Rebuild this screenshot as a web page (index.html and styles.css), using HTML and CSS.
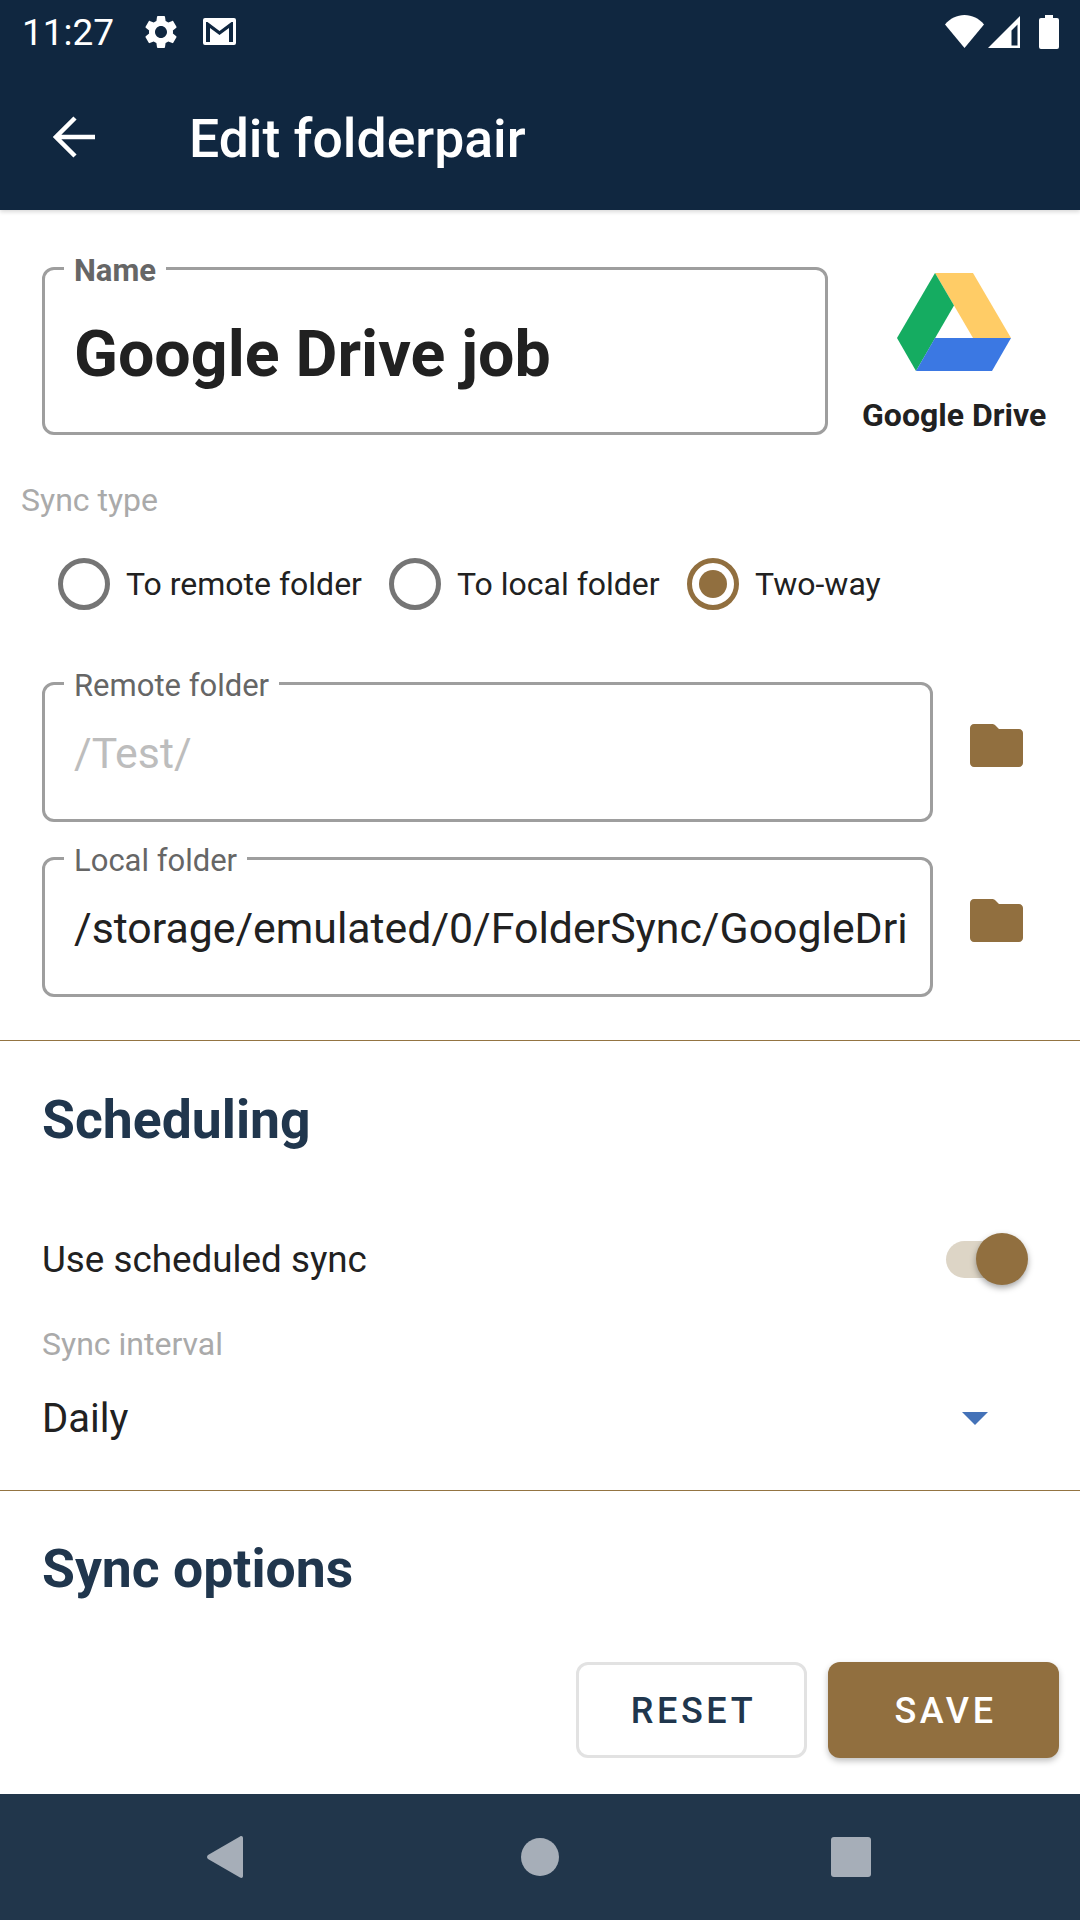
FILE: index.html

```html
<!DOCTYPE html>
<html lang="en-US">
    <head>
        <meta charset="utf-8">
        <title>Edit folderpair</title>
        <link rel="stylesheet" href="styles.css">
    </head>
    <body>
        <header class="appbar">
            <div class="statusbar">
                <span class="clock">11:27</span>
                <svg class="icon-gear" viewBox="0 0 24 24"><path fill="#fff" d="M19.14 12.94c.04-.3.06-.61.06-.94 0-.32-.02-.64-.07-.94l2.03-1.58c.18-.14.23-.41.12-.61l-1.92-3.32c-.12-.22-.37-.29-.59-.22l-2.39.96c-.5-.38-1.03-.7-1.62-.94l-.36-2.54c-.04-.24-.24-.41-.48-.41h-3.84c-.24 0-.43.17-.47.41l-.36 2.54c-.59.24-1.13.57-1.62.94l-2.39-.96c-.22-.08-.47 0-.59.22L2.74 8.87c-.12.21-.08.47.12.61l2.03 1.58c-.05.3-.09.63-.09.94s.02.64.07.94l-2.03 1.58c-.18.14-.23.41-.12.61l1.92 3.32c.12.22.37.29.59.22l2.39-.96c.5.38 1.03.7 1.62.94l.36 2.54c.05.24.24.41.48.41h3.84c.24 0 .44-.17.47-.41l.36-2.54c.59-.24 1.13-.56 1.62-.94l2.39.96c.22.08.47 0 .59-.22l1.92-3.32c.12-.22.07-.47-.12-.61l-2.01-1.58zM12 15.6c-1.98 0-3.6-1.62-3.6-3.6s1.62-3.6 3.6-3.6 3.6 1.62 3.6 3.6-1.62 3.6-3.6 3.6z"/></svg>
                <svg class="icon-mail" viewBox="0 0 33 27"><path fill="#fff" fill-rule="evenodd" d="M2 0h29a2 2 0 0 1 2 2v23a2 2 0 0 1-2 2H2a2 2 0 0 1-2-2V2a2 2 0 0 1 2-2zM3 4v20h4V10l9.500 7L26 10v14h4V4h-1.500L16.500 13 4.500 4z"/></svg>
                <span class="status-gap"></span>
                <svg class="icon-wifi" viewBox="0 0 39 33"><path fill="#fff" d="M19.500 33 0 9.500C5 3.500 12 0 19.500 0S34 3.500 39 9.500z"/></svg>
                <svg class="icon-signal" viewBox="0 0 32 32"><path fill="#fff" fill-rule="evenodd" d="M32 0v32H0zM29.500 8.500l-6 6V29.500h6z"/></svg>
                <svg class="icon-battery" viewBox="0 0 20 34"><path fill="#fff" d="M6 0h8v3h4a2 2 0 0 1 2 2v27a2 2 0 0 1-2 2H2a2 2 0 0 1-2-2V5a2 2 0 0 1 2-2h4z"/></svg>
            </div>
            <div class="toolbar">
                <svg class="icon-back" viewBox="0 0 42 42"><path fill="none" stroke="#fff" stroke-width="4.500" d="M42 21H4M22 2 3 21l19 19"/></svg>
                <h1>Edit folderpair</h1>
            </div>
        </header>

        <main class="content">
            <div class="name-row">
                <fieldset class="field field-name">
                    <legend>Name</legend>
                    <div class="value">Google Drive job</div>
                </fieldset>
                <div class="provider">
                    <svg class="drive-logo" viewBox="0 0 114 98">
                        <path fill="#ffcc66" d="M38 0h38l38 65H76z"/>
                        <path fill="#15ac61" d="M38 0 57 32.500 19 98 0 65z"/>
                        <path fill="#3b78e3" d="M38 65h76L95 98H19z"/>
                    </svg>
                    <span>Google Drive</span>
                </div>
            </div>

            <div class="sync-label">Sync type</div>
            <div class="radios">
                <label class="radio radio-remote"><span class="dot"></span>To remote folder</label>
                <label class="radio radio-local"><span class="dot"></span>To local folder</label>
                <label class="radio on"><span class="dot"></span>Two-way</label>
            </div>

            <div class="folder-row">
                <fieldset class="field field-folder">
                    <legend>Remote folder</legend>
                    <div class="value muted">/Test/</div>
                </fieldset>
                <svg class="icon-folder" viewBox="0 0 53 43"><path fill="#916f3f" d="M4 0h18c1.500 0 2.500.5 3.500 1.500L29 5h20c2.200 0 4 1.800 4 4v30c0 2.200-1.800 4-4 4H4c-2.200 0-4-1.800-4-4V4c0-2.200 1.800-4 4-4z"/></svg>
            </div>
            <div class="folder-row">
                <fieldset class="field field-folder">
                    <legend>Local folder</legend>
                    <div class="value">/storage/emulated/0/FolderSync/GoogleDri</div>
                </fieldset>
                <svg class="icon-folder" viewBox="0 0 53 43"><path fill="#916f3f" d="M4 0h18c1.500 0 2.500.5 3.500 1.500L29 5h20c2.200 0 4 1.800 4 4v30c0 2.200-1.800 4-4 4H4c-2.200 0-4-1.800-4-4V4c0-2.200 1.800-4 4-4z"/></svg>
            </div>

            <section class="section">
                <h2>Scheduling</h2>
                <div class="switch-row">
                    <span>Use scheduled sync</span>
                    <div class="switch"><div class="thumb"></div></div>
                </div>
                <div class="interval-label">Sync interval</div>
                <div class="select-row">
                    <span>Daily</span>
                    <div class="caret"></div>
                </div>
            </section>

            <section class="section section-options">
                <h2>Sync options</h2>
            </section>

            <div class="actions">
                <button class="btn btn-reset">RESET</button>
                <button class="btn btn-save">SAVE</button>
            </div>
        </main>

        <footer class="navbar">
            <svg class="nav-back" viewBox="0 0 36 42"><path fill="#a6aeb8" d="M33 .5c1.500-1 3-.3 3 1.500v38c0 1.800-1.500 2.500-3 1.500L1 23c-1.300-1-1.300-3 0-4z"/></svg>
            <div class="nav-home"></div>
            <div class="nav-recent"></div>
        </footer>
    </body>
</html>
```

FILE: styles.css

```css
* {
    box-sizing: border-box;
}

html, body {
    margin: 0;
    padding: 0;
}

body {
    width: 1080px;
    height: 1920px;
    display: flex;
    flex-direction: column;
    overflow: hidden;
    background: #fff;
    color: #212121;
    font-family: Roboto, sans-serif;
}

.appbar {
    height: 210px;
    background: #102740;
    color: #fff;
    box-shadow: 0 2px 4px rgba(0, 0, 0, 0.15);
    position: relative;
}

.statusbar {
    height: 63px;
    display: flex;
    align-items: center;
    padding: 0 21px 0 22px;
}

.clock {
    width: 123px;
    padding-top: 2px;
    font-size: 37px;
}

.icon-gear {
    width: 40px;
    height: 40px;
    margin-left: -4px;
}

.icon-mail {
    width: 33px;
    height: 27px;
    margin-left: 22px;
}

.status-gap {
    flex: 1;
}

.icon-wifi {
    width: 39px;
    height: 33px;
}

.icon-signal {
    width: 32px;
    height: 32px;
    margin-left: 4px;
}

.icon-battery {
    width: 20px;
    height: 34px;
    margin-left: 19px;
}

.toolbar {
    height: 147px;
    display: flex;
    align-items: center;
    padding-left: 53px;
}

.icon-back {
    width: 42px;
    height: 42px;
}

.toolbar h1 {
    margin: 0 0 0 94px;
    padding-top: 4px;
    font-size: 53.500px;
    font-weight: 500;
}

.content {
    flex: 1;
    display: flex;
    flex-direction: column;
    min-height: 0;
}

.field {
    margin: 0;
    padding: 0 22px 0 29px;
    border: 3px solid #9e9e9e;
    border-radius: 12px;
    min-width: 0;
}

.field legend {
    margin-left: -10px;
    padding: 6px 10px 0;
    font-size: 31px;
    line-height: 30px;
    color: #666;
}

.field-name legend {
    font-weight: 700;
}

.name-row {
    height: 225px;
    padding: 40px 0 0 42px;
    display: flex;
}

.field-name {
    width: 787px;
    height: 185px;
}

.field-name .value {
    font-size: 64.500px;
    font-weight: 700;
    line-height: 136px;
}

.provider {
    width: 252px;
    display: flex;
    flex-direction: column;
    align-items: center;
    padding-top: 23px;
    font-size: 32px;
    font-weight: 700;
}

.drive-logo {
    width: 114px;
    height: 98px;
    margin-bottom: 25px;
    flex: none;
}

.sync-label {
    margin: 47px 0 0 21px;
    font-size: 32px;
    line-height: 36px;
    color: #aaa;
}

.radios {
    height: 110px;
    margin-top: 11px;
    display: flex;
    align-items: center;
    padding-left: 58px;
    font-size: 32px;
}

.radio {
    display: flex;
    align-items: center;
}

.radio-remote {
    width: 331px;
}

.radio-local {
    width: 298px;
}

.dot {
    width: 52px;
    height: 52px;
    margin-right: 16px;
    border: 5px solid #757575;
    border-radius: 50%;
    display: flex;
    align-items: center;
    justify-content: center;
}

.on .dot {
    border-color: #916f3f;
}

.on .dot::after {
    content: "";
    width: 28px;
    height: 28px;
    border-radius: 50%;
    background: #916f3f;
}

.folder-row {
    display: flex;
    align-items: center;
    padding-left: 42px;
    margin-top: 18px;
}

.radios + .folder-row {
    margin-top: 26px;
}

.field-folder {
    width: 891px;
    height: 157px;
}

.field-folder .value {
    font-size: 42.800px;
    line-height: 105px;
    white-space: nowrap;
    overflow: hidden;
}

.value.muted {
    color: #bdbdbd;
}

.icon-folder {
    width: 53px;
    height: 43px;
    margin: 4px 0 0 37px;
}

.section {
    margin-top: 43px;
    border-top: 1px solid #937442;
    padding: 0 42px;
}

.section h2 {
    margin: 47px 0 0;
    font-size: 53.500px;
    line-height: 64px;
    font-weight: 700;
    color: #20364d;
}

.switch-row {
    height: 52px;
    margin-top: 81px;
    display: flex;
    align-items: center;
    justify-content: space-between;
    font-size: 36.800px;
}

.switch {
    width: 69px;
    height: 37px;
    margin-right: 23px;
    border-radius: 19px;
    background: #ddd5c6;
    position: relative;
}

.thumb {
    position: absolute;
    top: -8px;
    right: -13px;
    width: 52px;
    height: 52px;
    border-radius: 50%;
    background: #916f3f;
    box-shadow: 0 3px 6px rgba(0, 0, 0, 0.35);
}

.interval-label {
    margin-top: 41px;
    font-size: 32px;
    line-height: 36px;
    color: #aaa;
}

.select-row {
    height: 60px;
    margin-top: 26px;
    display: flex;
    align-items: center;
    justify-content: space-between;
    font-size: 40px;
}

.caret {
    width: 0;
    height: 0;
    margin-right: 50px;
    border-left: 13px solid transparent;
    border-right: 13px solid transparent;
    border-top: 13px solid #4472b8;
}

.section-options {
    margin-top: 42px;
}

.section-options h2 {
    margin-top: 46px;
}

.actions {
    margin-top: auto;
    padding: 0 21px 36px 0;
    display: flex;
    justify-content: flex-end;
    gap: 21px;
}

.btn {
    width: 231px;
    height: 96px;
    padding-top: 2px;
    border-radius: 12px;
    font-family: Roboto, sans-serif;
    font-size: 36px;
    font-weight: 500;
    letter-spacing: 3.600px;
    text-indent: 4px;
}

.btn-reset {
    background: #fff;
    border: 3px solid #e2e2e2;
    color: #20364d;
}

.btn-save {
    background: #916f3f;
    border: none;
    color: #fff;
    box-shadow: 0 3px 6px rgba(0, 0, 0, 0.25);
}

.navbar {
    height: 126px;
    background: #21364b;
    display: flex;
    align-items: center;
    padding-left: 207px;
}

.nav-back {
    width: 36px;
    height: 42px;
}

.nav-home {
    width: 38px;
    height: 38px;
    margin-left: 278px;
    border-radius: 50%;
    background: #a6aeb8;
}

.nav-recent {
    width: 40px;
    height: 40px;
    margin-left: 272px;
    border-radius: 3px;
    background: #a6aeb8;
}
```
